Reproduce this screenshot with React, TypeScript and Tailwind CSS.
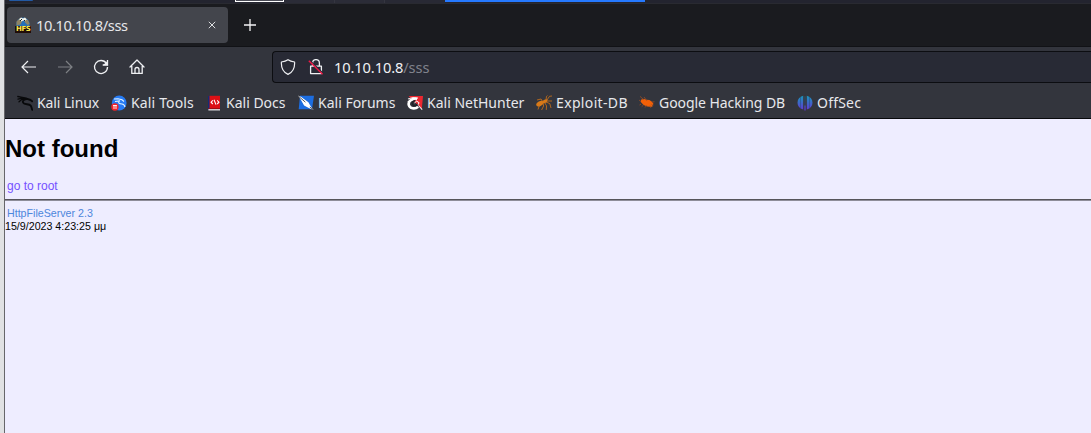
import type { ReactNode } from 'react';

function Icon({ children, className = '' }: { children: ReactNode; className?: string }) {
  return <svg viewBox="0 0 16 16" className={`h-4 w-4 shrink-0 ${className}`} fill="none">{children}</svg>;
}

function Dragon({ color }: { color: string }) {
  return (
    <g stroke={color} strokeLinecap="round" strokeLinejoin="round">
      <path d="M.8 1.5 4 2.1l4 .7 2.5 1.6M1 4.2l4-1 4 .5M2 6.8l3-2.5 4-.2" strokeWidth="1.3" />
      <path d="M9.5 3.6 13.5 5l1.6 1.3M9.5 4C5.5 4.5 5 7.3 7 8.5c2 1.2 5 .2 6.7 2.1.9 1.1.9 2.5 1.5 4.2" strokeWidth="1.9" />
    </g>
  );
}

const bookmarks: { label: string; width: string; text: string; icon: ReactNode }[] = [
  { label: 'Kali Linux', width: 'w-[94px]', text: 'tracking-[-0.1px]', icon: <Dragon color="#08090b" /> },
  {
    label: 'Kali Tools', width: 'w-[95px]', text: 'tracking-[0.15px]',
    icon: <>
      <circle cx="8.2" cy="8" r="7.4" fill="#267bf4" />
      <path d="m3 4 4-.3 4 1.1 2 1.7M4 6.5l5-.6c-3 1.8-.3 3 2 3.1 2 .2 2.7 1.8 3 3" stroke="#e3f4ff" strokeWidth="1.1" />
      <circle cx="3.9" cy="12" r="3.7" fill="#ef252b" />
      <path d="M2 10.5h3.9M3 10.5V14m2-3.5V14" stroke="#fff" strokeWidth=".9" />
    </>,
  },
  {
    label: 'Kali Docs', width: 'w-[92px]', text: 'tracking-[0px]',
    icon: <>
      <path d="M2 1h2v14H2z" fill="#142b78" />
      <path d="M3.5.8H14v12.8H3.5z" fill="#dc1015" />
      <path d="M2.4 14H14v1.5H2.4z" fill="#d9d9dc" />
      <path d="M2.4 13.6H14" stroke="#a20c12" />
      <path d="m6.8 5.4-1.7 1.8 1.7 1.8m4.4-3.6 1.7 1.8L11.2 9M8 4.8l2 4.8" stroke="#fff" strokeWidth="1.1" />
    </>,
  },
  {
    label: 'Kali Forums', width: 'w-[109px]', text: 'tracking-[0px]',
    icon: <>
      <path d="M2 .7h14L14 14.3H.7z" fill="#1c6de0" />
      <path d="m0 .6 3.2 1.3 7.2 5.4 2.4 4.1 2.8 3.6-4.8-2-4.7-2.6L2.4 4z" fill="#fff" />
      <path d="m.5 1.2 6.9 6M11.8 12l3.2 2.5" stroke="#252a34" strokeWidth=".8" />
    </>,
  },
  {
    label: 'Kali NetHunter', width: 'w-[129px]', text: 'tracking-[0px]',
    icon: <>
      <path d="M1.5 1H16l-1.2 13z" fill="#ed2730" />
      <path d="m1 4 5-1.5 5 .6M.7 6.7 7 4.5M15.2 14.7l-3.7-4.2" stroke="#f5e6e8" strokeWidth="1.1" />
      <path d="M10 4C4 3.4 1 6.6 1.8 10c.8 3.6 6.1 4.6 9.3 1.7" stroke="#fff" strokeWidth="2.7" />
      <path d="M8.5 5.5C5.3 6 4.5 8.2 6 10c1.4 1.5 3.7.5 4.7-1" stroke="#202127" strokeWidth="1.6" />
      <path d="m7.5 7.8 2.2-1.6 2.4 1.5-1.1 2.1" stroke="#fff" />
    </>,
  },
  {
    label: 'Exploit-DB', width: 'w-[103px]', text: 'tracking-[0.35px]',
    icon: <>
      <g fill="#d77918"><ellipse cx="3.9" cy="8.6" rx="3.9" ry="2.4" transform="rotate(-28 3.9 8.6)" /><ellipse cx="9" cy="6.2" rx="2.8" ry="1.6" transform="rotate(-25 9 6.2)" /></g>
      <path d="m7 7-2-3-4 1m9 0 .5-3.6 1-.8M11 5l2.5-3.7L16 1m-4.7 5H16M10 7l3.8 1.6L15 13M8.7 7.5l1.8 3.4-.2 4M7 8l.6 3-2 4M3.5 10 2 14.5" stroke="#cf7418" strokeWidth=".8" />
    </>,
  },
  {
    label: 'Google Hacking DB', width: 'w-[158px]', text: 'tracking-[-0.06px]',
    icon: <>
      <path d="m2.2 4.4 3-.4 2.2.7 3.1.3 2.4 1.8 1.7 2.1-1.4 1.4.3 1.4-2.4.1-2.8-.2-3.7-1.6L1.8 7z" fill="#f16008" />
      <path d="m1 1.4 4 3.4M5 2l3 4M2 6.5 0 5m2 4-1.5 1m4 0-1.8 1.7M8 10l-2 2.5m5-2 .8 2.4M13 7l2.5-.2M12.3 9l2 2" stroke="#a85124" strokeWidth=".7" />
    </>,
  },
  {
    label: 'OffSec', width: 'w-[64px]', text: 'tracking-[0.2px]',
    icon: <>
      <defs><linearGradient id="offsec" gradientUnits="userSpaceOnUse" x1="0" y1="0" x2="0" y2="16"><stop stopColor="#159bb8" /><stop offset="1" stopColor="#6830d8" /></linearGradient></defs>
      <path d="M6.2.8v13.7C2.6 13.3.5 11 .5 7.7c0-3.4 2.1-5.9 5.7-6.9ZM9.8.8v13.7c3.6-1.2 5.7-3.5 5.7-6.8 0-3.4-2.1-5.9-5.7-6.9ZM7.4 1.2h1.2v14.3H7.4Z" fill="url(#offsec)" />
      <path d="M3.5 2v11M12.5 2v11" stroke="#26456e" strokeWidth=".45" />
      <path d="M8 .5v10" stroke="#33353d" strokeWidth="1.4" />
    </>,
  },
];

function HfsIcon() {
  return (
    <div className="relative h-4 w-4 shrink-0">
      <Icon>
        <circle cx="8" cy="7.2" r="6.7" fill="#2470b9" />
        <path d="m1.5 4.5 3-3 3 2-2 4-4 1zM10 2l3 1 1.6 4-2 1-3-3z" fill="#8e8465" />
        <path d="m4 2.2 2-1.7 2 1 2-1 1.8 2-2 1.6-1.6-.6-1.6 1z" fill="#f1f2e9" />
        <path d="m5 4 2-2m2 1 1 1" stroke="#15222c" />
        <path d="M0 9h16v7H0z" fill="#200d08" />
      </Icon>
      <span className="absolute bottom-0 left-[1px] font-['DejaVu_Sans',sans-serif] text-[7px] leading-[7px] font-bold tracking-[-0.45px] text-[#ffe94c]">HFS</span>
    </div>
  );
}

export default function App() {
  return (
    <div className="flex h-[433px] w-full overflow-hidden bg-[#eeedff] font-['Noto_Sans',sans-serif]">
      <div className="w-[5px] shrink-0 border-r border-[#66666a] bg-[#e0e1e3]" />
      <div className="flex min-w-0 flex-1 flex-col">
        <div className="flex h-[3px] shrink-0 bg-[#23242f]">
          <div className="w-[230px]"><div className="ml-1 h-px w-6 rounded-b-full bg-[#2259a3]" /></div>
          <div className="h-[2px] w-[49px] border-x border-b border-white bg-[#4a4b55]" />
          <div className="w-[51px] border-r border-[#353640] bg-[#2b2c37]" />
          <div className="w-[50px] border-r border-[#353640] bg-[#2b2c37]" />
          <div className="w-[60px] bg-[#282934]" />
          <div className="h-[2px] w-[200px] bg-[#2579ff]" />
        </div>
        <div className="flex h-[44px] shrink-0 border-t border-b border-t-[#292a31] border-b-[#111216] bg-[#1a1b1f] pt-[3px] pl-[2px]">
          <div className="flex h-9 w-[221px] items-center rounded-[4px] bg-[#43454c] pl-2 text-[#e6e7ea]">
            <HfsIcon />
            <span className="ml-[5px] flex-1 text-[14.67px] leading-5 tracking-[-0.38px]">10.10.10.8/sss</span>
            <svg viewBox="0 0 10 10" className="mr-3 h-2 w-2"><path d="m1 1 8 8M9 1 1 9" stroke="#dedfe2" strokeWidth="1.25" /></svg>
          </div>
          <div className="flex h-9 w-[43px] items-center justify-center"><svg viewBox="0 0 12 12" className="h-3 w-3"><path d="M6 0v12M0 6h12" stroke="#f4f4f6" strokeWidth="1.3" /></svg></div>
        </div>
        <div className="flex h-[72px] shrink-0 flex-col border-b border-[#08090c] bg-[#33353d]">
          <div className="flex h-10 items-center pl-4">
            <Icon><path d="M15 8H1m6-6L1 8l6 6" stroke="#eff0f3" strokeWidth="1.2" /></Icon>
            <Icon className="ml-5"><path d="M1 8h14M9 2l6 6-6 6" stroke="#7e8085" strokeWidth="1.2" /></Icon>
            <Icon className="ml-5"><path d="M13.4 4.4A6.5 6.5 0 1 0 14.5 8M14.5 1v5H9.7" stroke="#eff0f3" strokeWidth="1.3" /><path d="M14.8 1.5v4.7H10z" fill="#eff0f3" /></Icon>
            <Icon className="ml-5"><path d="m1 8 7-7 7 7M2.8 6.2v8.2h10.4V6.2M6 14v-3.5a2 2 0 0 1 4 0V14" stroke="#eff0f3" strokeWidth="1.3" strokeLinejoin="round" strokeLinecap="round" /></Icon>
            <div className="ml-[127px] flex h-8 flex-1 items-center rounded-l-[4px] border border-r-0 border-[#0c0d11] bg-[#282a35] pl-[7px]">
              <Icon><path d="M8 .7c2 1.5 4.3 2 6.6 2.3.3 5.2-1.8 10.2-6.6 12.4C3.2 13.2 1.1 8.2 1.4 3 3.7 2.7 6 2.2 8 .7Z" stroke="#eff0f3" strokeWidth="1.2" strokeLinejoin="round" /></Icon>
              <Icon className="ml-3"><path d="M4.6 7V4a3.4 3.4 0 0 1 6.8 0v3M2.6 7.2h10.8v7.4H2.6z" stroke="#eff0f3" strokeWidth="1.3" strokeLinejoin="round" /><path d="M2.2 1.6 15.8 15" stroke="#282a35" strokeWidth="1.2" /><path d="m.8 1.8 13.8 13.5" stroke="#f01745" strokeWidth="1.4" /></Icon>
              <div className="ml-[10px] text-[14.67px] leading-5 tracking-[-0.12px] text-[#f0f1f4]">10.10.10.8<span className="text-[#81828c]">/sss</span></div>
            </div>
          </div>
          <div className="flex h-[31px] items-center pl-3">
            {bookmarks.map((item) => (
              <div key={item.label} className={`flex shrink-0 items-center gap-1 ${item.width}`}>
                <Icon>{item.icon}</Icon>
                <span className={`text-[14px] leading-5 whitespace-nowrap text-[#e7e8ec] ${item.text}`}>{item.label}</span>
              </div>
            ))}
          </div>
        </div>
        <main className="flex-1 bg-[#eeedff] pt-4 font-['Liberation_Sans',sans-serif] text-black">
          <h1 className="text-2xl leading-7 font-bold">Not found</h1>
          <div className="mt-4 pl-[2px] text-[12px] leading-[15px] text-[#7551ff]">go to root</div>
          <div className="mt-[5px] h-[2px] border-t border-[#55555a] bg-[#8e8d99]" />
          <div className="mt-[6px] pl-[2px] text-[10.67px] leading-[13px] text-[#4d86dc]">HttpFileServer 2.3</div>
          <div className="text-[10.67px] leading-[13px]">15/9/2023 4:23:25 μμ</div>
        </main>
      </div>
    </div>
  );
}
